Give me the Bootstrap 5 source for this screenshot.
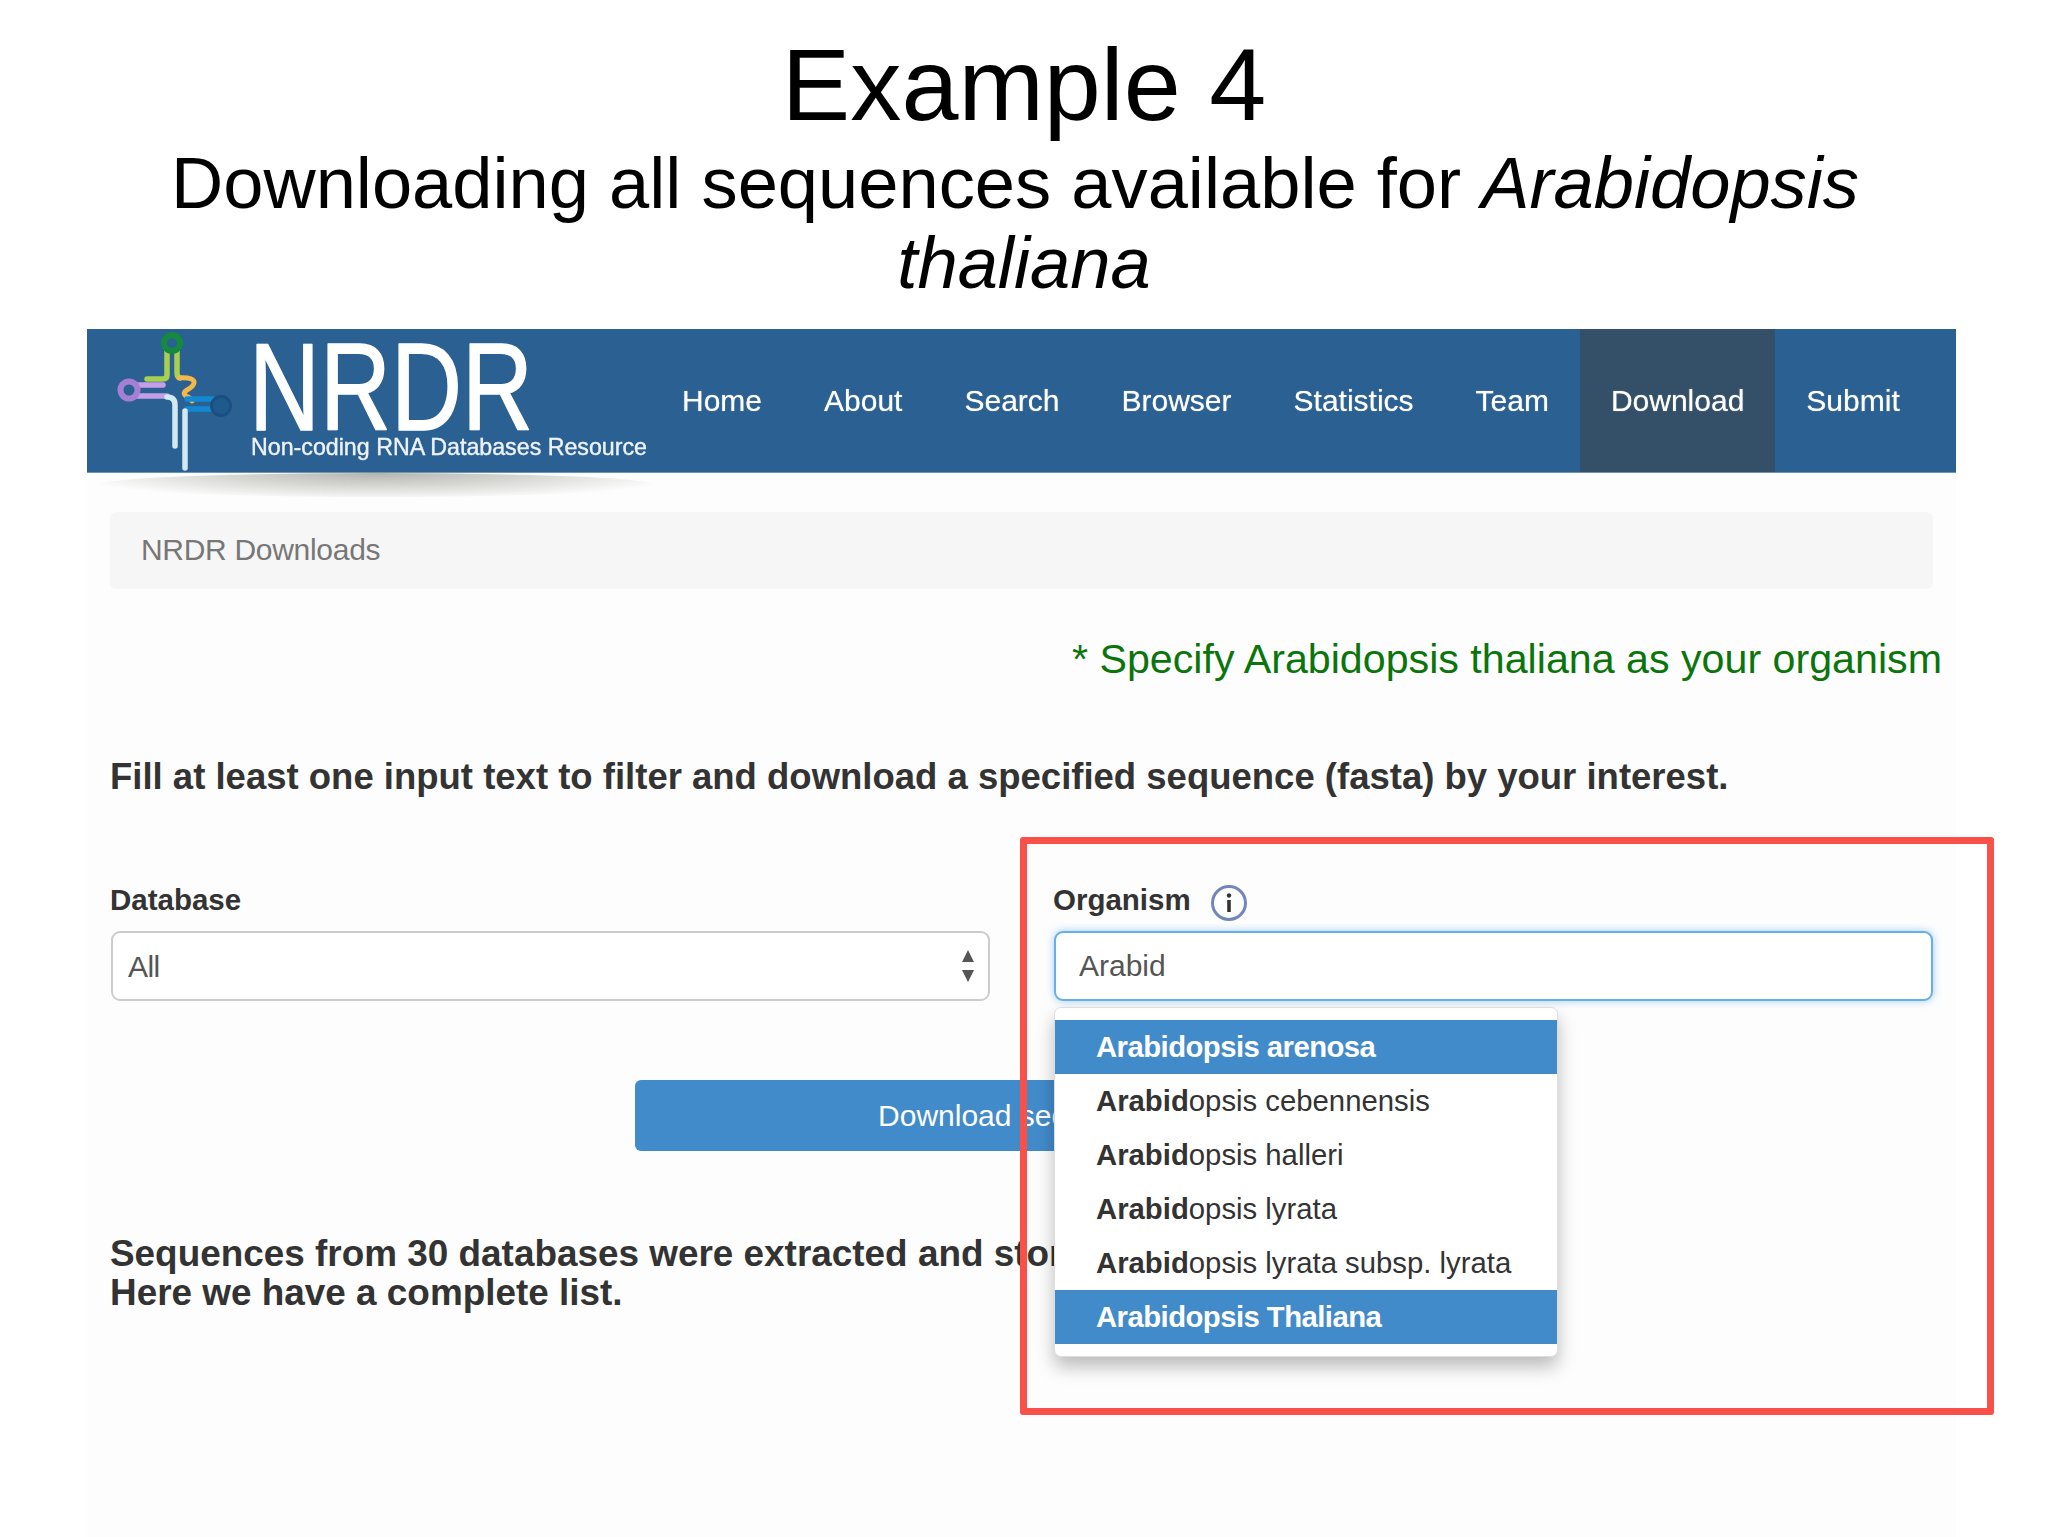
<!DOCTYPE html>
<html lang="en">
<head>
<meta charset="utf-8">
<title>Example 4</title>
<link href="https://cdn.jsdelivr.net/npm/bootstrap@5.3.0/dist/css/bootstrap.min.css" rel="stylesheet">
<style>
html,body{background:#fff;margin:0}
body{font-family:"Liberation Sans",Arial,sans-serif;color:#000;width:2048px;height:1537px;overflow:hidden;position:relative}
.slide-head{height:329px;padding-top:25px;text-align:center;color:#000}
.slide-title{font-size:102.5px;line-height:120px;font-weight:400;margin:0;font-family:inherit}
.slide-sub{font-size:72.3px;line-height:80px;margin:-2px 0 0;font-weight:400;font-family:inherit}
.slide-sub span{display:block}
.slide-sub .first-line{padding-right:18px}
.shot{margin:0 92px 0 87px;height:1208px;position:relative;filter:blur(.5px);background:#fdfdfd}
.shot-nav{height:144px;background:#2b6092;padding:0;align-items:stretch;flex-wrap:nowrap;position:relative;border-bottom:1px solid #6d93b6;justify-content:flex-start}
.shot-nav::after{content:"";position:absolute;left:12px;width:556px;top:144px;height:24px;border-radius:50%;background:radial-gradient(ellipse at 50% 0,rgba(120,120,110,.55),rgba(120,120,110,0) 80%)}
.brand-svg{display:block;width:564px;height:144px;flex:none;overflow:visible}
.navbar-expand .shot-links{flex-direction:row;margin-left:0;align-items:stretch}
.navbar-expand .shot-links .nav-link{color:#fff;font-size:30px;padding:0 31px;display:flex;align-items:center;height:143px;text-shadow:0 0 1px rgba(255,255,255,.7)}
.navbar-expand .shot-links .nav-link.active{background:#345069;color:#fff}
.crumb-bar{background:#f6f6f6;border-radius:6px;margin:39px 23px 0;height:77px;padding:0 31px 2px;display:flex;align-items:center;color:#777;font-size:30px;letter-spacing:-.3px}
.hint-line{color:#0b750b;font-size:41.2px;line-height:50px;text-align:right;margin:45px 14px 0 0}
.fill-line{color:#333;font-size:36.5px;line-height:44px;font-weight:700;margin:71px 23px 0;letter-spacing:0}
.form-cols{display:grid;grid-template-columns:879px 879px;column-gap:64px;margin:84px 23px 0 24px}
.field-label{font-size:29.5px;line-height:34px;font-weight:700;color:#333;margin:0 0 0 -1px;height:48px;display:flex;align-items:flex-start;gap:18px}
.info-svg{width:40px;height:40px;flex:none;margin-top:0}
.shot-select,.shot-input{height:70px;font-size:30px;color:#555;border-radius:9px;background-color:#fff;padding:0 15px}
.shot-select{border:2px solid #ccc;background-size:18px 36px;background-position:right 11px center;padding-right:50px;letter-spacing:-.6px;background-image:url("data:image/svg+xml,%3Csvg xmlns='http://www.w3.org/2000/svg' viewBox='0 0 18 36'%3E%3Cpath fill='%23555' d='M9 2l6 12H3zM9 34L3 22h12z'/%3E%3C/svg%3E")}
.shot-input{border:2px solid #66afe9;box-shadow:0 0 9px rgba(102,175,233,.6);padding-left:23px}
.shot-input:focus{border-color:#66afe9;box-shadow:0 0 9px rgba(102,175,233,.6);color:#555}
.org-col{position:relative}
.org-menu{position:absolute;top:124px;left:0;width:504px;padding:12px 0 12px;margin:0;border:1px solid #ddd;border-radius:7px;background:#fff;box-shadow:0 10px 18px rgba(0,0,0,.26);display:block;z-index:5}
.org-menu .dropdown-item{height:54px;padding:0 41px;line-height:53px;font-size:29.3px;color:#333}
.org-menu .dropdown-item.active{background:#428bca;color:#fff;font-weight:700;letter-spacing:-.55px}
.org-menu b{font-weight:700}
.btn-row{display:flex;justify-content:center;margin-top:79px;padding:0 23px}
.btn-fetch{width:774px;height:71px;background:#428bca;border:0;color:#fff;font-size:30px;border-radius:6px;font-weight:400}
.seq-note{color:#333;font-size:36.9px;line-height:39px;font-weight:700;margin:83px 23px 0;letter-spacing:0}
.red-frame{position:absolute;left:1020px;top:837px;width:974px;height:578px;border:7px solid #f9504a;border-radius:3px;pointer-events:none;z-index:3}
</style>
</head>
<body>
<header class="slide-head">
  <h1 class="slide-title">Example 4</h1>
  <h2 class="slide-sub"><span class="first-line">Downloading all sequences available for <i>Arabidopsis</i></span><span><i>thaliana</i></span></h2>
</header>
<main class="shot">
  <nav class="navbar navbar-expand shot-nav">
    <svg class="brand-svg" viewBox="0 0 564 144" aria-label="NRDR">
      <g fill="none" stroke-linecap="round" stroke-width="5.5">
        <path d="M80 22V46q0 4-4 4H60M90 22V44q0 4 3 5" stroke="#a8d050"/>
        <circle cx="85" cy="14" r="8" stroke="#148a3e" stroke-width="6"/>
        <path d="M50 56H76M50 67H80" stroke="#c49ee8"/>
        <circle cx="42" cy="61" r="8.5" stroke="#a47fd4" stroke-width="6"/>
        <path d="M92 49q16-1 15 5q-1 4-7 7q-5 3-1 6q5 2 6 5" stroke="#f2b84c" stroke-width="5"/>
        <path d="M100 70H126M100 80H126" stroke="#1289d0"/>
        <circle cx="134" cy="77" r="9.5" stroke="#1b4f80" fill="#1f5a8e" stroke-width="3"/>
        <path d="M80 68q8 0 8 8V117" stroke="#d3e9f2"/>
        <path d="M98 82V139" stroke="#d3e9f2"/>
      </g>
      <text x="162" y="101" font-family="Liberation Sans" font-size="125" fill="#fff" stroke="#fff" stroke-width="1.5" stroke-linejoin="round" textLength="284" lengthAdjust="spacingAndGlyphs">NRDR</text>
      <text x="164" y="126" font-family="Liberation Sans" font-size="24" font-weight="400" fill="#eef3f8" stroke="#eef3f8" stroke-width=".4" textLength="396" lengthAdjust="spacingAndGlyphs">Non-coding RNA Databases Resource</text>
    </svg>
    <ul class="navbar-nav shot-links">
      <li class="nav-item"><a class="nav-link" href="#">Home</a></li>
      <li class="nav-item"><a class="nav-link" href="#">About</a></li>
      <li class="nav-item"><a class="nav-link" href="#">Search</a></li>
      <li class="nav-item"><a class="nav-link" href="#">Browser</a></li>
      <li class="nav-item"><a class="nav-link" href="#">Statistics</a></li>
      <li class="nav-item"><a class="nav-link" href="#">Team</a></li>
      <li class="nav-item"><a class="nav-link active" href="#">Download</a></li>
      <li class="nav-item"><a class="nav-link" href="#">Submit</a></li>
    </ul>
  </nav>
  <div class="crumb-bar">NRDR Downloads</div>
  <p class="hint-line">* Specify Arabidopsis thaliana as your organism</p>
  <p class="fill-line">Fill at least one input text to filter and download a specified sequence (fasta) by your interest.</p>
  <form class="form-cols">
    <div>
      <label class="field-label">Database</label>
      <select class="form-select shot-select"><option>All</option></select>
    </div>
    <div class="org-col">
      <label class="field-label">Organism
        <svg class="info-svg" viewBox="0 0 40 40"><circle cx="20" cy="20" r="16.5" fill="#fff" stroke="#7186bd" stroke-width="3"/><circle cx="20" cy="12.5" r="2.2" fill="#333"/><rect x="18.2" y="17" width="3.6" height="12" fill="#333"/></svg>
      </label>
      <input class="form-control shot-input" type="text" value="Arabid">
      <ul class="dropdown-menu show org-menu">
        <li><a class="dropdown-item active" href="#">Arabidopsis arenosa</a></li>
        <li><a class="dropdown-item" href="#"><b>Arabid</b>opsis cebennensis</a></li>
        <li><a class="dropdown-item" href="#"><b>Arabid</b>opsis halleri</a></li>
        <li><a class="dropdown-item" href="#"><b>Arabid</b>opsis lyrata</a></li>
        <li><a class="dropdown-item" href="#"><b>Arabid</b>opsis lyrata subsp. lyrata</a></li>
        <li><a class="dropdown-item active" href="#">Arabidopsis Thaliana</a></li>
      </ul>
    </div>
  </form>
  <div class="btn-row"><button type="button" class="btn btn-primary btn-fetch">Download sequences</button></div>
  <p class="seq-note">Sequences from 30 databases were extracted and stored.<br>Here we have a complete list.</p>
</main>
<div class="red-frame"></div>
<script src="https://cdn.jsdelivr.net/npm/bootstrap@5.3.0/dist/js/bootstrap.bundle.min.js"></script>
</body>
</html>
